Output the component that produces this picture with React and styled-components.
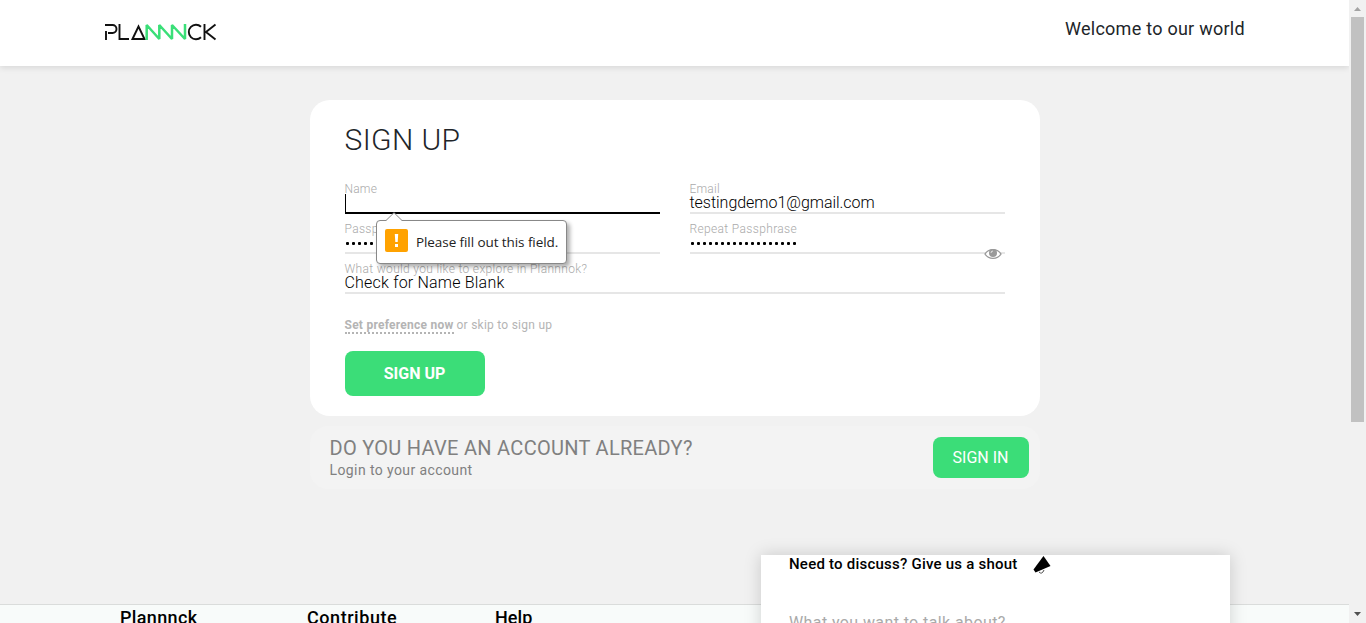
import React from "react";
import styled, { createGlobalStyle } from "styled-components";

const Global = createGlobalStyle`
  * { box-sizing: border-box; }
  html, body { margin: 0; padding: 0; overflow: hidden; }
  body { font-family: Roboto, "Liberation Sans", sans-serif; color: #212529; background: #f1f1f1; }
`;
const Window = styled.div`
  display: flex;
  width: 1366px;
  height: 623px;
  overflow: hidden;
`;
const Page = styled.div`
  position: relative;
  display: flex;
  flex-direction: column;
  width: 1349px;
  height: 623px;
  overflow: hidden;
  background: #f1f1f1;
`;
const Header = styled.header`
  display: flex;
  justify-content: space-between;
  flex: none;
  height: 66px;
  padding: 0 104px;
  background: #fff;
  box-shadow: 0 2px 6px rgba(0, 0, 0, 0.1);
`;
const Logo = styled.svg`
  width: 114px;
  height: 20px;
  margin-top: 22px;
`;
const Text = styled.span`
  white-space: nowrap;
  font-size: ${(p) => p.$size}px;
  line-height: ${(p) => p.$line}px;
  font-weight: ${(p) => p.$weight || 400};
  letter-spacing: ${(p) => p.$track || 0}px;
  color: ${(p) => p.$color || "inherit"};
`;
const Welcome = styled(Text)`
  margin-top: 18px;
  width: 180px;
`;
const Main = styled.main`
  display: flex;
  flex-direction: column;
  flex: none;
  align-items: center;
  gap: 10px;
  height: 538px;
  padding-top: 34px;
`;
const Card = styled.form`
  width: 730px;
  height: 316px;
  padding: 22px 35px 0;
  border-radius: 20px;
  background: #fff;
`;
const Title = styled(Text).attrs({ as: "h1" })`
  margin: 0 0 16px;
`;
const Fields = styled.div`
  display: grid;
  grid-template-columns: 1fr 1fr;
  column-gap: 30px;
`;
const FieldBox = styled.div`
  position: relative;
  display: flex;
  flex-direction: column;
  height: 40px;
  padding-top: 7px;
  grid-column: ${(p) => (p.$wide ? "1 / -1" : "auto")};
  border-bottom: 2px solid ${(p) => (p.$active ? "#000" : "#e6e6e6")};
`;
const Caret = styled.span`
  width: 1px;
  height: 20px;
  margin-top: -3px;
  background: #000;
`;
const Dots = styled.span`
  display: flex;
  gap: 3.06px;
  padding: 5px 0 0 1px;
`;
const Dot = styled.i`
  width: 3px;
  height: 3px;
  border-radius: 1px;
  background: #000;
`;
const Eye = styled.svg`
  position: absolute;
  right: 3px;
  top: 34px;
  width: 18px;
  height: 12px;
`;
const Bubble = styled.div`
  position: absolute;
  z-index: 2;
  left: 31px;
  top: 46px;
  display: flex;
  align-items: center;
  width: 191px;
  height: 44px;
  padding-left: 8px;
  gap: 8.5px;
  border: 1px solid #888;
  border-radius: 4px;
  background: #fff;
  color: #000;
  font-family: "Open Sans", "Noto Sans", sans-serif;
  box-shadow: 3px 3px 4px rgba(0, 0, 0, 0.32);
`;
const BubbleTip = styled.svg`
  position: absolute;
  left: 8px;
  top: -9px;
  width: 18px;
  height: 10px;
`;
const BubbleText = styled(Text)`
  font-family: inherit;
`;
const WarningIcon = styled.svg`
  flex: none;
  width: 23px;
  height: 23px;
  margin-top: -3px;
`;
const Preference = styled.div`
  display: flex;
  align-items: flex-start;
  gap: 3px;
  height: 57px;
  padding-top: 24px;
`;
const Link = styled(Text).attrs({ as: "a" })`
  width: 109px;
  border-bottom: 2px dotted #b4b4b4;
`;
const Button = styled.button`
  display: flex;
  align-items: center;
  justify-content: center;
  width: ${(p) => p.$w}px;
  height: ${(p) => p.$h}px;
  padding: 0;
  border: 0;
  border-radius: 8px;
  background: #3bdd78;
  color: #fff;
  font-family: inherit;
`;
const Login = styled.section`
  display: flex;
  justify-content: space-between;
  width: 730px;
  height: 63px;
  padding: 11px 11px 0 20px;
  border-radius: 18px;
  background: #f3f3f3;
  color: #808080;
`;
const LoginText = styled.div`
  display: flex;
  flex-direction: column;
`;
const Footer = styled.footer`
  display: grid;
  grid-template-columns: 187px 188px 200px;
  flex: none;
  height: 60px;
  padding: 3px 0 0 120px;
  border-top: 1px solid #dadcdb;
  background: #f8fbfa;
  color: #000;
`;
const Shout = styled.aside`
  position: absolute;
  left: 761px;
  top: 555px;
  width: 469px;
  height: 120px;
  padding-left: 28px;
  background: #fff;
  color: #000;
  box-shadow: 0 0 16px rgba(0, 0, 0, 0.17);
`;
const ShoutHead = styled.div`
  display: flex;
  gap: 14px;
  height: 58px;
`;
const Scrollbar = styled.div`
  display: flex;
  flex-direction: column;
  align-items: center;
  justify-content: space-between;
  width: 17px;
  height: 623px;
  background: #f1f1f1;
`;
const Thumb = styled.div`
  width: 13px;
  height: 405px;
  margin-bottom: auto;
  background: #c1c1c1;
`;
const Arrow = styled.svg`
  width: 17px;
  height: 17px;
`;

function Field({ label, labelTrack, value, track, dots, wide, active, children }) {
  return (
    <FieldBox $wide={wide} $active={active}>
      <Text $size={12} $line={16} $weight={300} $track={labelTrack} $color="#aaa">{label}</Text>
      {value && <Text $size={16} $line={12} $weight={300} $track={track} $color="#000">{value}</Text>}
      {dots && <Dots>{Array.from({ length: dots }, (_, i) => <Dot key={i} />)}</Dots>}
      {active && <Caret />}
      {children}
    </FieldBox>
  );
}

export default function App() {
  return (
    <Window>
      <Global />
      <Page>
        <Header>
          <Logo viewBox="0 0 114 20" fill="none" strokeWidth="1.9">
            <g stroke="#111">
              <path d="M2 18V9M1 3H8.500A4 4 0 0 1 8.500 11H4M15.500 2V17H25M28.500 17L34.500 4.500L40.500 17Z" />
              <path d="M97 4.800A7.200 7.200 0 1 0 97 15.200M100.500 2V18M111.500 2.500L102 10L111.500 17.500" />
            </g>
            <path stroke="#3adf78" strokeWidth="2.5" strokeLinejoin="bevel" d="M42.700 18V3L55.300 17V3L68 17V3L81 17V2" />
          </Logo>
          <Welcome $size={18} $line={22} $track={0.26}>Welcome to our world</Welcome>
        </Header>
        <Main>
          <Card>
            <Title $size={30} $line={36} $weight={300} $track={0.4}>SIGN UP</Title>
            <Fields>
              <Field label="Name" active labelTrack={0.2}>
                <Bubble>
                  <BubbleTip viewBox="0 0 18 10"><path d="M0 9.500L9 .7L18 9.500V10H0Z" fill="#fff" /><path d="M0 8.500H1L9 .7L17 8.500H18" fill="none" stroke="#888" /></BubbleTip>
                  <WarningIcon viewBox="0 0 23 23"><rect width="23" height="23" rx="2" fill="#ffa200" /><path d="M9.800 5H13.200L12.700 13H10.300ZM10 15H13V18H10Z" fill="#fff" /></WarningIcon>
                  <BubbleText $size={13.5} $line={18} $track={-0.08} $color="#222">Please fill out this field.</BubbleText>
                </Bubble>
              </Field>
              <Field label="Email" value="testingdemo1@gmail.com" track={-0.03} labelTrack={0.2} />
              <Field label="Passphrase" dots={18} labelTrack={0.32} />
              <Field label="Repeat Passphrase" dots={18} labelTrack={0.35}>
                <Eye viewBox="0 0 18 12">
                  <path d="M1 6C4.500 .1 13.500 .1 17 6C13.500 11.900 4.500 11.900 1 6Z" fill="#fff" stroke="#999" strokeWidth="1.400" />
                  <circle cx="9" cy="5" r="4" fill="#999" /><path d="M7 5Q7 3 9 3" fill="none" stroke="#fff" strokeWidth=".7" />
                </Eye>
              </Field>
              <Field wide label="What would you like to explore in Plannnok?" value="Check for Name Blank" track={0.2} labelTrack={0.33} />
            </Fields>
            <Preference>
              <Link $size={12} $line={14} $weight={700} $track={0.25} $color="#b4b4b4">Set preference now</Link>
              <Text $size={12} $line={14} $track={0.25} $color="#b4b4b4">or skip to sign up</Text>
            </Preference>
            <Button type="button" $w={140} $h={45}><Text $size={16} $line={20} $weight={700}>SIGN UP</Text></Button>
          </Card>
          <Login>
            <LoginText>
              <Text $size={20} $line={23} $track={0.29}>DO YOU HAVE AN ACCOUNT ALREADY?</Text>
              <Text $size={14} $line={20} $track={0.4}>Login to your account</Text>
            </LoginText>
            <Button $w={96} $h={41}><Text $size={16} $line={20}>SIGN IN</Text></Button>
          </Login>
        </Main>
        <Footer>
          <Text $size={18} $line={20} $weight={500} $track={0.35}>Plannnck</Text>
          <Text $size={18} $line={20} $weight={500} $track={0.55}>Contribute</Text>
          <Text $size={18} $line={20} $weight={500} $track={0.1}>Help</Text>
        </Footer>
        <Shout>
          <ShoutHead>
            <Text $size={15} $line={18} $weight={500} $track={0.23}>Need to discuss? Give us a shout</Text>
            <svg width="20" height="20" viewBox="0 0 20 20"><path d="M11.500 1L18.500 11L3.500 17.500L1.500 14.500Z" fill="#000" /><path d="M7 17Q10 20 12 15" fill="none" stroke="#222" strokeWidth=".8" /></svg>
          </ShoutHead>
          <Text $size={16} $line={20} $color="#aaa" $track={0.4}>What you want to talk about?</Text>
        </Shout>
      </Page>
      <Scrollbar>
        <Arrow viewBox="0 0 17 17"><path d="M5 11L8.500 7L12 11Z" fill="#a3a3a3" /></Arrow>
        <Thumb />
        <Arrow viewBox="0 0 17 17"><path d="M5 6L8.500 10L12 6Z" fill="#505050" /></Arrow>
      </Scrollbar>
    </Window>
  );
}
